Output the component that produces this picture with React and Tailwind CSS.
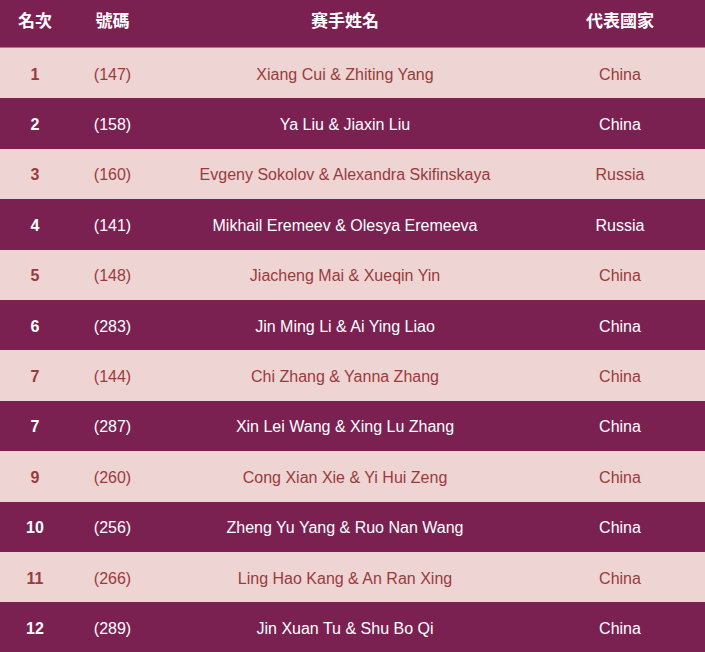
const rows = [
  ['1', '(147)', 'Xiang Cui & Zhiting Yang', 'China'],
  ['2', '(158)', 'Ya Liu & Jiaxin Liu', 'China'],
  ['3', '(160)', 'Evgeny Sokolov & Alexandra Skifinskaya', 'Russia'],
  ['4', '(141)', 'Mikhail Eremeev & Olesya Eremeeva', 'Russia'],
  ['5', '(148)', 'Jiacheng Mai & Xueqin Yin', 'China'],
  ['6', '(283)', 'Jin Ming Li & Ai Ying Liao', 'China'],
  ['7', '(144)', 'Chi Zhang & Yanna Zhang', 'China'],
  ['7', '(287)', 'Xin Lei Wang & Xing Lu Zhang', 'China'],
  ['9', '(260)', 'Cong Xian Xie & Yi Hui Zeng', 'China'],
  ['10', '(256)', 'Zheng Yu Yang & Ruo Nan Wang', 'China'],
  ['11', '(266)', 'Ling Hao Kang & An Ran Xing', 'China'],
  ['12', '(289)', 'Jin Xuan Tu & Shu Bo Qi', 'China'],
];

const cols = 'grid grid-cols-[70px_85px_380px_170px] items-center text-center';

export default function App() {
  return (
    <div className="w-[705px] h-[652px] overflow-hidden bg-[#7a2152] font-['Liberation_Sans',Arial,sans-serif] text-[16px]">
      <div className={`${cols} h-[48px] border-b border-[#d26a6f] text-white font-bold font-['Noto_Sans_CJK_TC','Liberation_Sans',sans-serif] text-[17px] pb-[8px]`}>
        <div>名次</div>
        <div>號碼</div>
        <div>赛手姓名</div>
        <div>代表國家</div>
      </div>
      {rows.map((r, i) => {
        const light = i % 2 === 0;
        return (
          <div
            key={i}
            className={`${cols} h-[50.4px] pt-[3px] ${light ? 'bg-[#efd4d4] text-[#9a3b3b]' : 'bg-[#7a2152] text-white'}`}
          >
            <div className="font-bold">{r[0]}</div>
            <div>{r[1]}</div>
            <div>{r[2]}</div>
            <div>{r[3]}</div>
          </div>
        );
      })}
    </div>
  );
}
